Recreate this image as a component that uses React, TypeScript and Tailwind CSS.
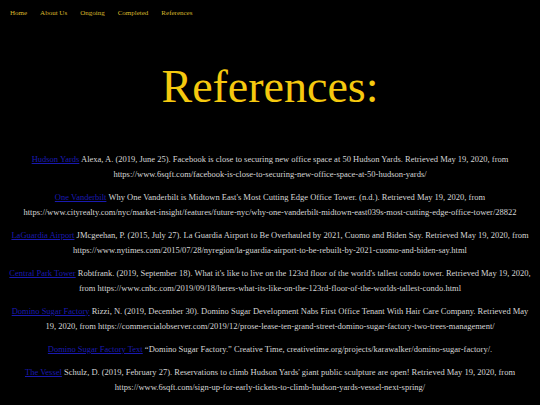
import React from "react";

const refs: { link: string; text: string }[] = [
  {
    link: "Hudson Yards",
    text: "Alexa, A. (2019, June 25). Facebook is close to securing new office space at 50 Hudson Yards. Retrieved May 19, 2020, from https://www.6sqft.com/facebook-is-close-to-securing-new-office-space-at-50-hudson-yards/",
  },
  {
    link: "One Vanderbilt",
    text: "Why One Vanderbilt is Midtown East's Most Cutting Edge Office Tower. (n.d.). Retrieved May 19, 2020, from https://www.cityrealty.com/nyc/market-insight/features/future-nyc/why-one-vanderbilt-midtown-east039s-most-cutting-edge-office-tower/28822",
  },
  {
    link: "LaGuardia Airport",
    text: "JMcgeehan, P. (2015, July 27). La Guardia Airport to Be Overhauled by 2021, Cuomo and Biden Say. Retrieved May 19, 2020, from https://www.nytimes.com/2015/07/28/nyregion/la-guardia-airport-to-be-rebuilt-by-2021-cuomo-and-biden-say.html",
  },
  {
    link: "Central Park Tower",
    text: "Robtfrank. (2019, September 18). What it's like to live on the 123rd floor of the world's tallest condo tower. Retrieved May 19, 2020, from https://www.cnbc.com/2019/09/18/heres-what-its-like-on-the-123rd-floor-of-the-worlds-tallest-condo.html",
  },
  {
    link: "Domino Sugar Factory",
    text: "Rizzi, N. (2019, December 30). Domino Sugar Development Nabs First Office Tenant With Hair Care Company. Retrieved May 19, 2020, from https://commercialobserver.com/2019/12/prose-lease-ten-grand-street-domino-sugar-factory-two-trees-management/",
  },
  {
    link: "Domino Sugar Factory Text",
    text: "\u201cDomino Sugar Factory.\u201d Creative Time, creativetime.org/projects/karawalker/domino-sugar-factory/.",
  },
  {
    link: "The Vessel",
    text: "Schulz, D. (2019, February 27). Reservations to climb Hudson Yards' giant public sculpture are open! Retrieved May 19, 2020, from https://www.6sqft.com/sign-up-for-early-tickets-to-climb-hudson-yards-vessel-next-spring/",
  },
];

export default function App() {
  return (
    <div
      className="w-[540px] h-[405px] overflow-hidden bg-black"
      style={{ fontFamily: '"Liberation Serif", "Times New Roman", serif' }}
    >
      <nav className="flex gap-[13px] px-[10px] pt-[9px] text-[7px] leading-[9px] text-[#d9b92c]">
        <span>Home</span>
        <span>About Us</span>
        <span>Ongoing</span>
        <span>Completed</span>
        <span>References</span>
      </nav>
      <h1 className="mt-[42px] text-center text-[46px] leading-[54px] text-[#f5c90f]">
        References:
      </h1>
      <div className="mt-[38px] px-[6px] flex flex-col gap-[8px]">
        {refs.map((r) => (
          <p
            key={r.link}
            className="text-center text-[8.5px] leading-[15px] text-[#d6d6d6]"
          >
            <a className="text-[#1a1ab0] underline">{r.link}</a> {r.text}
          </p>
        ))}
      </div>
    </div>
  );
}
